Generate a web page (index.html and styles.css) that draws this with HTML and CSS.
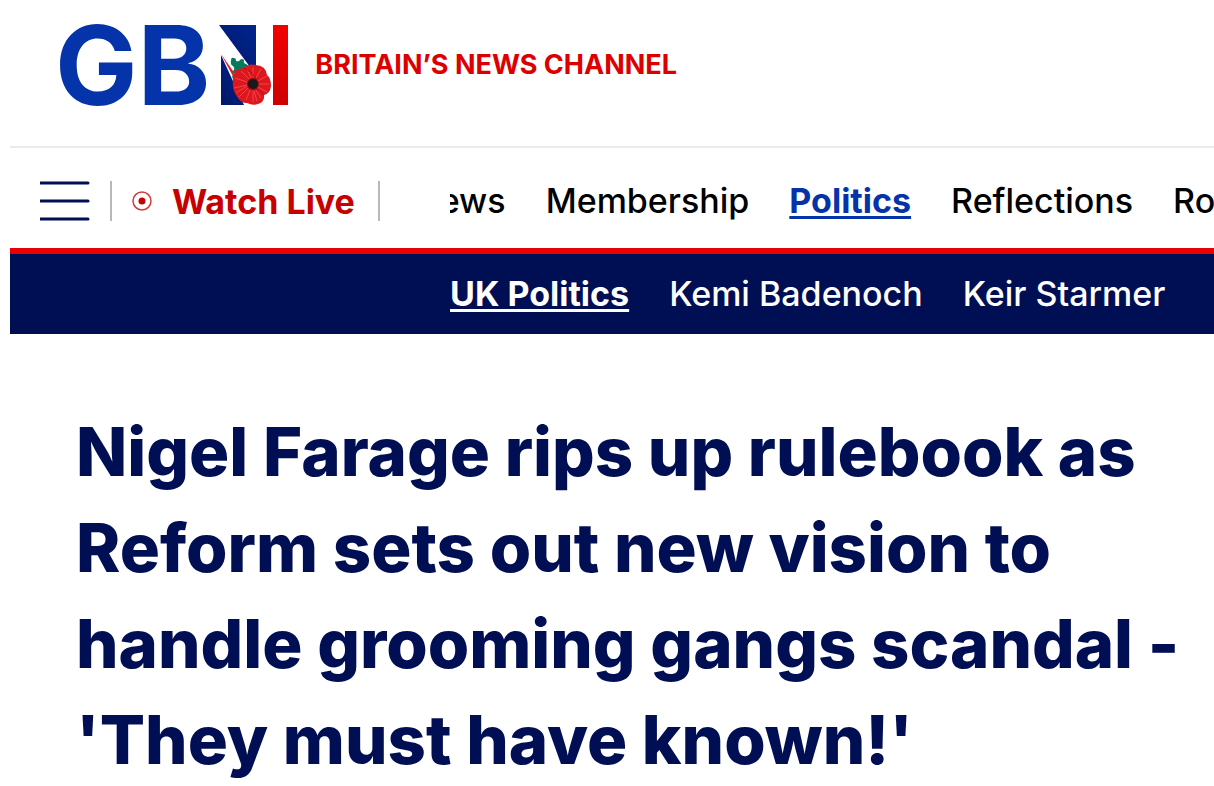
FILE: index.html
```
<!DOCTYPE html>
<html lang="en">
<head>
    <meta charset="UTF-8">
    <meta name="viewport" content="width=device-width, initial-scale=1.0">
    <title>GB News</title>
    <link rel="stylesheet" href="styles.css">
</head>
<body>
    <header class="header">
        <a class="logo" href="#" aria-label="GB News">
            <span class="logo-text">GB</span>
            <svg class="logo-mark" viewBox="0 0 70 84" aria-hidden="true">
                <defs>
                    <linearGradient id="blue" x1="0" y1="1" x2="1" y2="0">
                        <stop offset="0" stop-color="#001866"/>
                        <stop offset="1" stop-color="#002590"/>
                    </linearGradient>
                    <linearGradient id="red" x1="0" y1="0" x2="0" y2="1">
                        <stop offset="0" stop-color="#f20000"/>
                        <stop offset="1" stop-color="#cf0000"/>
                    </linearGradient>
                </defs>
                <path d="M0 2H37V50L31 44Z" fill="url(#blue)"/>
                <path d="M2 32L25 82H2Z" fill="url(#blue)"/>
                <path d="M2 31L14 48L16 57Z" fill="#dc1c24"/>
                <path d="M54 2H69V82H54Z" fill="url(#red)"/>
                <!-- poppy -->
                <path d="M12 37q0-3 3-2q2 0 2 3q3 1 4-1q2-2 4 0q-1 3 2 4l3 2l-6 12l-10 1q-2-3 1-5q-3-2 0-4q1-2-1-4q-3-1-2-6Z" fill="#087a5c"/>
                <path d="M16 48Q20 45 25 45Q30 40 37 42Q47 43 48 52Q52 55 52 63Q51 71 45 72Q46 79 39 81Q34 83 28 80Q22 81 17 72Q11 62 16 48Z" fill="#dd171e"/>
                <g stroke="#f4434b" stroke-width="1">
                    <path d="M34 54V44M37 55L42 46M39 58L48 53M40 61L50 61M39 64L48 69M37 67L42 75M34 68V79M31 67L27 77M29 65L20 74M28 62L15 65M28 59L16 55M30 56L22 48M32 55L28 46M35 68L38 78M28 63L17 70"/>
                </g>
                <path d="M25 45Q32 48 37 55M37 66Q44 69 45 72" fill="none" stroke="#b60c14"/>
                <circle cx="34" cy="61" r="6" fill="#8c1014"/>
                <circle cx="34" cy="61" r="5" fill="#1c191b"/>
            </svg>
        </a>
        <p class="tagline">BRITAIN’S NEWS CHANNEL</p>
    </header>

    <div class="nav-bar">
        <button class="menu-button" aria-label="Menu">
            <svg width="50" height="40" viewBox="0 0 50 40" stroke="#000e54" stroke-width="3" stroke-linecap="round">
                <path d="M0 2H48M0 20H48M0 38H48"/>
            </svg>
        </button>
        <a class="watch-live" href="#">
            <svg width="20" height="20" viewBox="0 0 20 20">
                <circle cx="10" cy="10" r="9" fill="none" stroke="#d23c3c" stroke-width="1.5"/>
                <circle cx="10" cy="10" r="3.5" fill="#c70000"/>
            </svg>
            Watch Live
        </a>
        <nav class="nav-scroller">
            <div class="nav-list nav-main">
                <a href="#">News</a>
                <a href="#">Membership</a>
                <a class="active" href="#">Politics</a>
                <a href="#">Reflections</a>
                <a href="#">Royal</a>
            </div>
        </nav>
    </div>

    <nav class="sub-nav">
        <div class="nav-list">
            <a class="active" href="#">UK Politics</a>
            <a href="#">Kemi Badenoch</a>
            <a href="#">Keir Starmer</a>
        </div>
    </nav>

    <main class="article">
        <h1>Nigel Farage rips up rulebook as<br>Reform sets out new vision to<br>handle grooming gangs scandal -<br>'They must have known!'</h1>
    </main>
</body>
</html>
```
FILE: styles.css
```
body {
    margin: 0 0 0 10px;
    background: #fff;
    color: #000e54;
    font-family: Inter, sans-serif;
    overflow-x: hidden;
}

a {
    color: inherit;
    text-decoration: none;
}

.header {
    display: flex;
    align-items: center;
    gap: 26px;
    padding: 23px 45px 39px;
    border-bottom: 2px solid #ebebeb;
}

.logo {
    display: flex;
    align-items: center;
    gap: 9px;
    height: 84px;
}

.logo-text {
    color: #0533a9;
    font-size: 110px;
    font-weight: 700;
    line-height: 84px;
}

.logo-mark {
    width: 70px;
    height: 84px;
}

.tagline {
    margin: 0;
    color: #dc0000;
    font-size: 27px;
    font-weight: 700;
    line-height: 32px;
    white-space: nowrap;
}

.nav-bar {
    display: flex;
    align-items: center;
    box-sizing: border-box;
    height: 100px;
    padding-top: 6px;
    padding-left: 30px;
}

.menu-button {
    display: flex;
    padding: 0;
    border: 0;
    background: none;
    cursor: pointer;
}

.watch-live {
    display: flex;
    flex: none;
    align-items: center;
    gap: 20px;
    box-sizing: border-box;
    width: 270px;
    height: 40px;
    margin-left: 20px;
    padding-left: 20px;
    border-left: 2px solid #b8b8b8;
    border-right: 2px solid #b8b8b8;
    color: #c70000;
    font-size: 34px;
    font-weight: 700;
    white-space: nowrap;
}

.nav-scroller {
    flex: 1;
    min-width: 0;
    margin-left: 70px;
    overflow: hidden;
}

.nav-list {
    display: flex;
    gap: 40px;
    font-size: 34px;
    font-weight: 500;
    line-height: 40px;
    white-space: nowrap;
}

.nav-list .active {
    font-weight: 700;
    text-decoration: underline;
    text-decoration-thickness: 3px;
    text-underline-offset: 3px;
}

/* list sits part-scrolled, so the first item runs under the left edge */
.nav-main {
    margin-left: -36px;
    color: #000;
}

.nav-main .active {
    color: #0533a9;
}

.sub-nav {
    padding: 20px 0 20px 440px;
    border-top: 6px solid #eb0000;
    background: #000e54;
    color: #fff;
    overflow: hidden;
}

.article {
    padding: 70px 0 0 66px;
}

.article h1 {
    margin: 0;
    font-size: 67px;
    font-weight: 800;
    line-height: 96px;
    white-space: nowrap;
}
```
